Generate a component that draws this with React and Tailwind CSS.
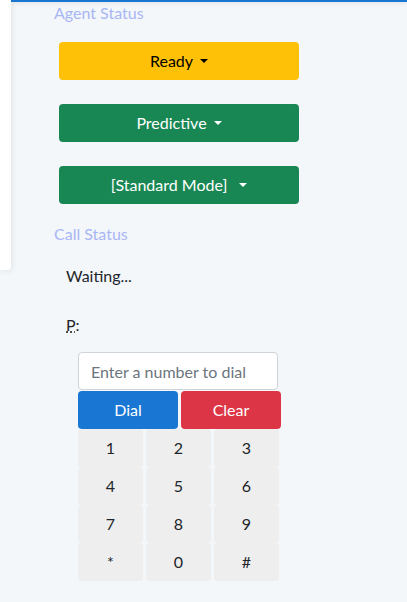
import { useState } from 'react';

const KEYS = ['1', '2', '3', '4', '5', '6', '7', '8', '9', '*', '0', '#'];

const Caret = ({ wide }) => (
  <span className={`${wide ? 'ml-[12px]' : 'ml-[7px]'} inline-block w-0 h-0 border-l-[4px] border-r-[4px] border-t-[4px] border-l-transparent border-r-transparent align-middle`} style={{ borderTopColor: 'currentColor' }} />
);

const StatusButton = ({ label, className, wide }) => (
  <button className={`w-[240px] h-[38px] rounded-[4px] flex items-center justify-center text-[16px] ${className}`}>
    <span>{label}</span>
    <Caret wide={wide} />
  </button>
);

export default function App() {
  const [number, setNumber] = useState('');

  return (
    <div className="relative w-[407px] h-[602px] bg-[#f3f7fa] overflow-hidden" style={{ fontFamily: 'Lato, "Noto Sans", sans-serif' }}>
      {/* top bar edge */}
      <div className="absolute top-0 left-0 right-0 h-[2px] bg-[#1976d2] shadow-[0_1px_4px_rgba(0,0,0,0.12)]" />
      {/* sidebar edge */}
      <div className="absolute top-0 left-0 w-[11px] h-[270px] bg-white rounded-br-[4px] shadow-[1px_1px_6px_rgba(0,0,0,0.08)]" />

      <div className="pl-[54px] pt-[1px]">
        <div className="text-[16px] leading-[24px] text-[#a9b6f5]">Agent Status</div>
        <div className="pl-[5px] pt-[17px] flex flex-col gap-[24px]">
          <StatusButton label="Ready" className="bg-[#ffc107] text-black" />
          <StatusButton label="Predictive" className="bg-[#198754] text-white" />
          <StatusButton label="[Standard Mode]" className="bg-[#198754] text-white" wide />
        </div>
        <div className="mt-[18px] text-[16px] leading-[24px] text-[#a9b6f5]">Call Status</div>
        <div className="pl-[12px] pt-[18px] text-[16px] leading-[24px] text-[#212529]">Waiting...</div>
        <div className="pl-[12px] pt-[25px] text-[16px] leading-[24px] text-[#212529]">
          <abbr className="underline decoration-dotted" title="Phone">P</abbr>:
        </div>

        <div className="pl-[24px] pt-[15px] w-[228px] box-content">
          <input
            value={number}
            onChange={(e) => setNumber(e.target.value)}
            placeholder="Enter a number to dial"
            className="w-[200px] h-[38px] px-[12px] rounded-[4px] border border-[#ced4da] bg-white text-[16px] text-[#212529] placeholder:text-[#6c757d] outline-none"
          />
          <div className="flex gap-[3px] mt-[1px]">
            <button className="w-[100px] h-[38px] rounded-[4px] bg-[#1976d2] text-white text-[16px]">Dial</button>
            <button className="w-[100px] h-[38px] rounded-[4px] bg-[#dc3545] text-white text-[16px]">Clear</button>
          </div>
          <div className="grid grid-cols-[65px_65px_65px] gap-x-[3px] w-[202px]">
            {KEYS.map((k) => (
              <button
                key={k}
                onClick={() => setNumber(number + k)}
                className="h-[38px] rounded-[4px] bg-[#eeeeee] text-[#212529] text-[16px]"
              >
                {k}
              </button>
            ))}
          </div>
        </div>
      </div>
    </div>
  );
}
